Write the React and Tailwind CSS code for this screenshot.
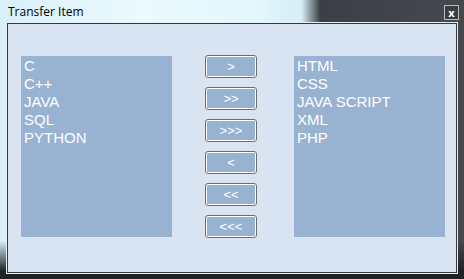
import React from "react";

const left = ["C", "C++", "JAVA", "SQL", "PYTHON"];
const right = ["HTML", "CSS", "JAVA SCRIPT", "XML", "PHP"];
const buttons = [">", ">>", ">>>", "<", "<<", "<<<"];

function List({ items }) {
  return (
    <div className="w-[151px] h-[181px] bg-[#98b3d1] pt-[1px] pl-[3px] flex flex-col">
      {items.map((t) => (
        <div key={t} className="text-white text-[15px] leading-[18px] whitespace-pre" style={{ fontFamily: '"Liberation Sans", Arial, sans-serif' }}>
          {t}
        </div>
      ))}
    </div>
  );
}

export default function App() {
  return (
    <div
      className="w-[464px] h-[279px] flex flex-col bg-[linear-gradient(to_right,#d9f0f9_0%,#eafafd_30%,#e4f7fc_55%,#d6eef6_65%,#3b4044_69%,#45494d_100%)]"
      style={{ fontFamily: '"Noto Sans", "Open Sans", sans-serif' }}
    >
      <div className="h-[22px] flex items-start justify-between pl-[8px] pr-[5px]">
        <span className="text-[12px] leading-[12px] mt-[6px] text-black" style={{ fontFamily: '"Open Sans", "Noto Sans", sans-serif' }}>
          Transfer Item
        </span>
        <div className="mt-[5px] w-[15px] h-[15px] border border-[#b8bcc0] bg-[#3a3e42] flex items-center justify-center text-white text-[11px] leading-none font-bold">
          x
        </div>
      </div>
      <div className="flex-1 flex flex-col bg-[linear-gradient(to_bottom,transparent_0%,transparent_85%,#1e2224_97%)]">
        <div className="flex-1 mx-[6px] mb-[5px] border border-[#e8f0f6] bg-[#2a2e31] p-0">
          <div className="w-full h-full border border-[#35393c] bg-[#d8e4f1] flex items-start pt-[32px] pl-[13px]">
            <List items={left} />
            <div className="ml-[33px] -mt-[1px] flex flex-col gap-[9px]">
              {buttons.map((b) => (
                <div key={b} className="w-[52px] h-[23px] rounded-[3px] border border-[#6e6e6e] bg-white p-[1px]">
                  <div className="w-full h-full bg-[#98b3d1] flex items-center justify-center text-white text-[13px] leading-none" style={{ fontFamily: '"Liberation Sans", Arial, sans-serif' }}>
                    {b}
                  </div>
                </div>
              ))}
            </div>
            <div className="ml-[37px]">
              <List items={right} />
            </div>
          </div>
        </div>
      </div>
    </div>
  );
}
